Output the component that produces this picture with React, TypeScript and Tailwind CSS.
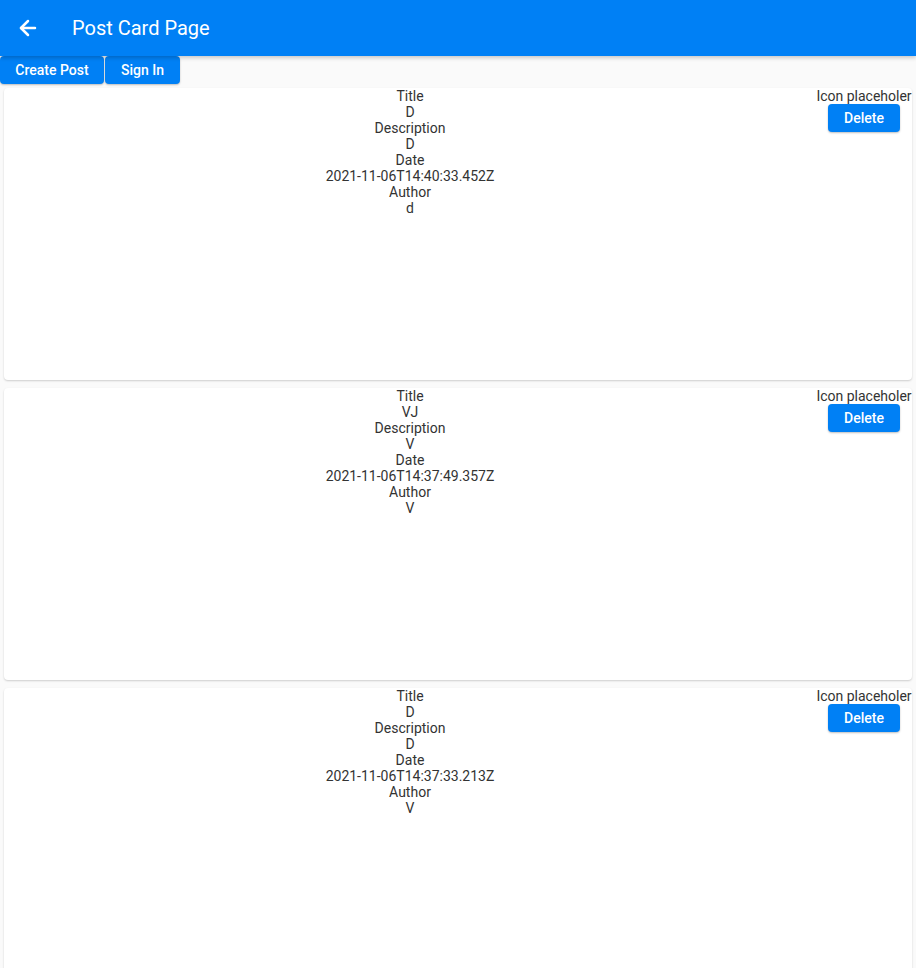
import { ArrowLeft } from 'lucide-react';

interface Post {
  title: string;
  description: string;
  date: string;
  author: string;
}

const posts: Post[] = [
  { title: 'D', description: 'D', date: '2021-11-06T14:40:33.452Z', author: 'd' },
  { title: 'VJ', description: 'V', date: '2021-11-06T14:37:49.357Z', author: 'V' },
  { title: 'D', description: 'D', date: '2021-11-06T14:37:33.213Z', author: 'V' },
];

function PostCard({ post }: { post: Post }) {
  return (
    <div className="mx-1 my-1 h-[292px] shrink-0 rounded bg-white shadow-[0_1px_2px_rgba(0,0,0,0.18)] flex">
      {/* Post fields */}
      <div className="flex-1 flex flex-col items-center text-[14px] leading-4 text-[#333333]">
        <span>Title</span>
        <span>{post.title}</span>
        <span>Description</span>
        <span>{post.description}</span>
        <span>Date</span>
        <span>{post.date}</span>
        <span>Author</span>
        <span>{post.author}</span>
      </div>

      {/* Right side actions */}
      <div className="w-[96px] flex flex-col items-center">
        <span className="text-[14px] leading-4 text-[#333333] whitespace-nowrap">Icon placeholer</span>
        <button className="w-[72px] h-[28px] rounded bg-[#0080f5] text-white text-[14px] font-medium shadow-[0_1px_2px_rgba(0,0,0,0.25)]">
          Delete
        </button>
      </div>
    </div>
  );
}

export default function App() {
  return (
    <div className="w-[916px] h-[968px] overflow-hidden bg-[#fafafa] flex flex-col font-['Roboto',sans-serif]">
      {/* App bar */}
      <header className="h-14 shrink-0 bg-[#0080f5] flex items-center shadow-[0_2px_4px_rgba(0,0,0,0.2)] z-10">
        <div className="w-14 flex items-center justify-center">
          <ArrowLeft className="w-6 h-6 text-white" strokeWidth={2.5} />
        </div>
        <h1 className="ml-4 text-white text-[20px] font-normal">Post Card Page</h1>
      </header>

      {/* Top buttons */}
      <div className="flex gap-px shrink-0">
        <button className="w-[104px] h-7 rounded bg-[#0080f5] text-white text-[14px] font-medium shadow-[0_1px_2px_rgba(0,0,0,0.25)]">
          Create Post
        </button>
        <button className="w-[75px] h-7 rounded bg-[#0080f5] text-white text-[14px] font-medium shadow-[0_1px_2px_rgba(0,0,0,0.25)]">
          Sign In
        </button>
      </div>

      {/* Post list */}
      <div className="flex flex-col">
        {posts.map((post, i) => (
          <PostCard key={i} post={post} />
        ))}
      </div>
    </div>
  );
}
